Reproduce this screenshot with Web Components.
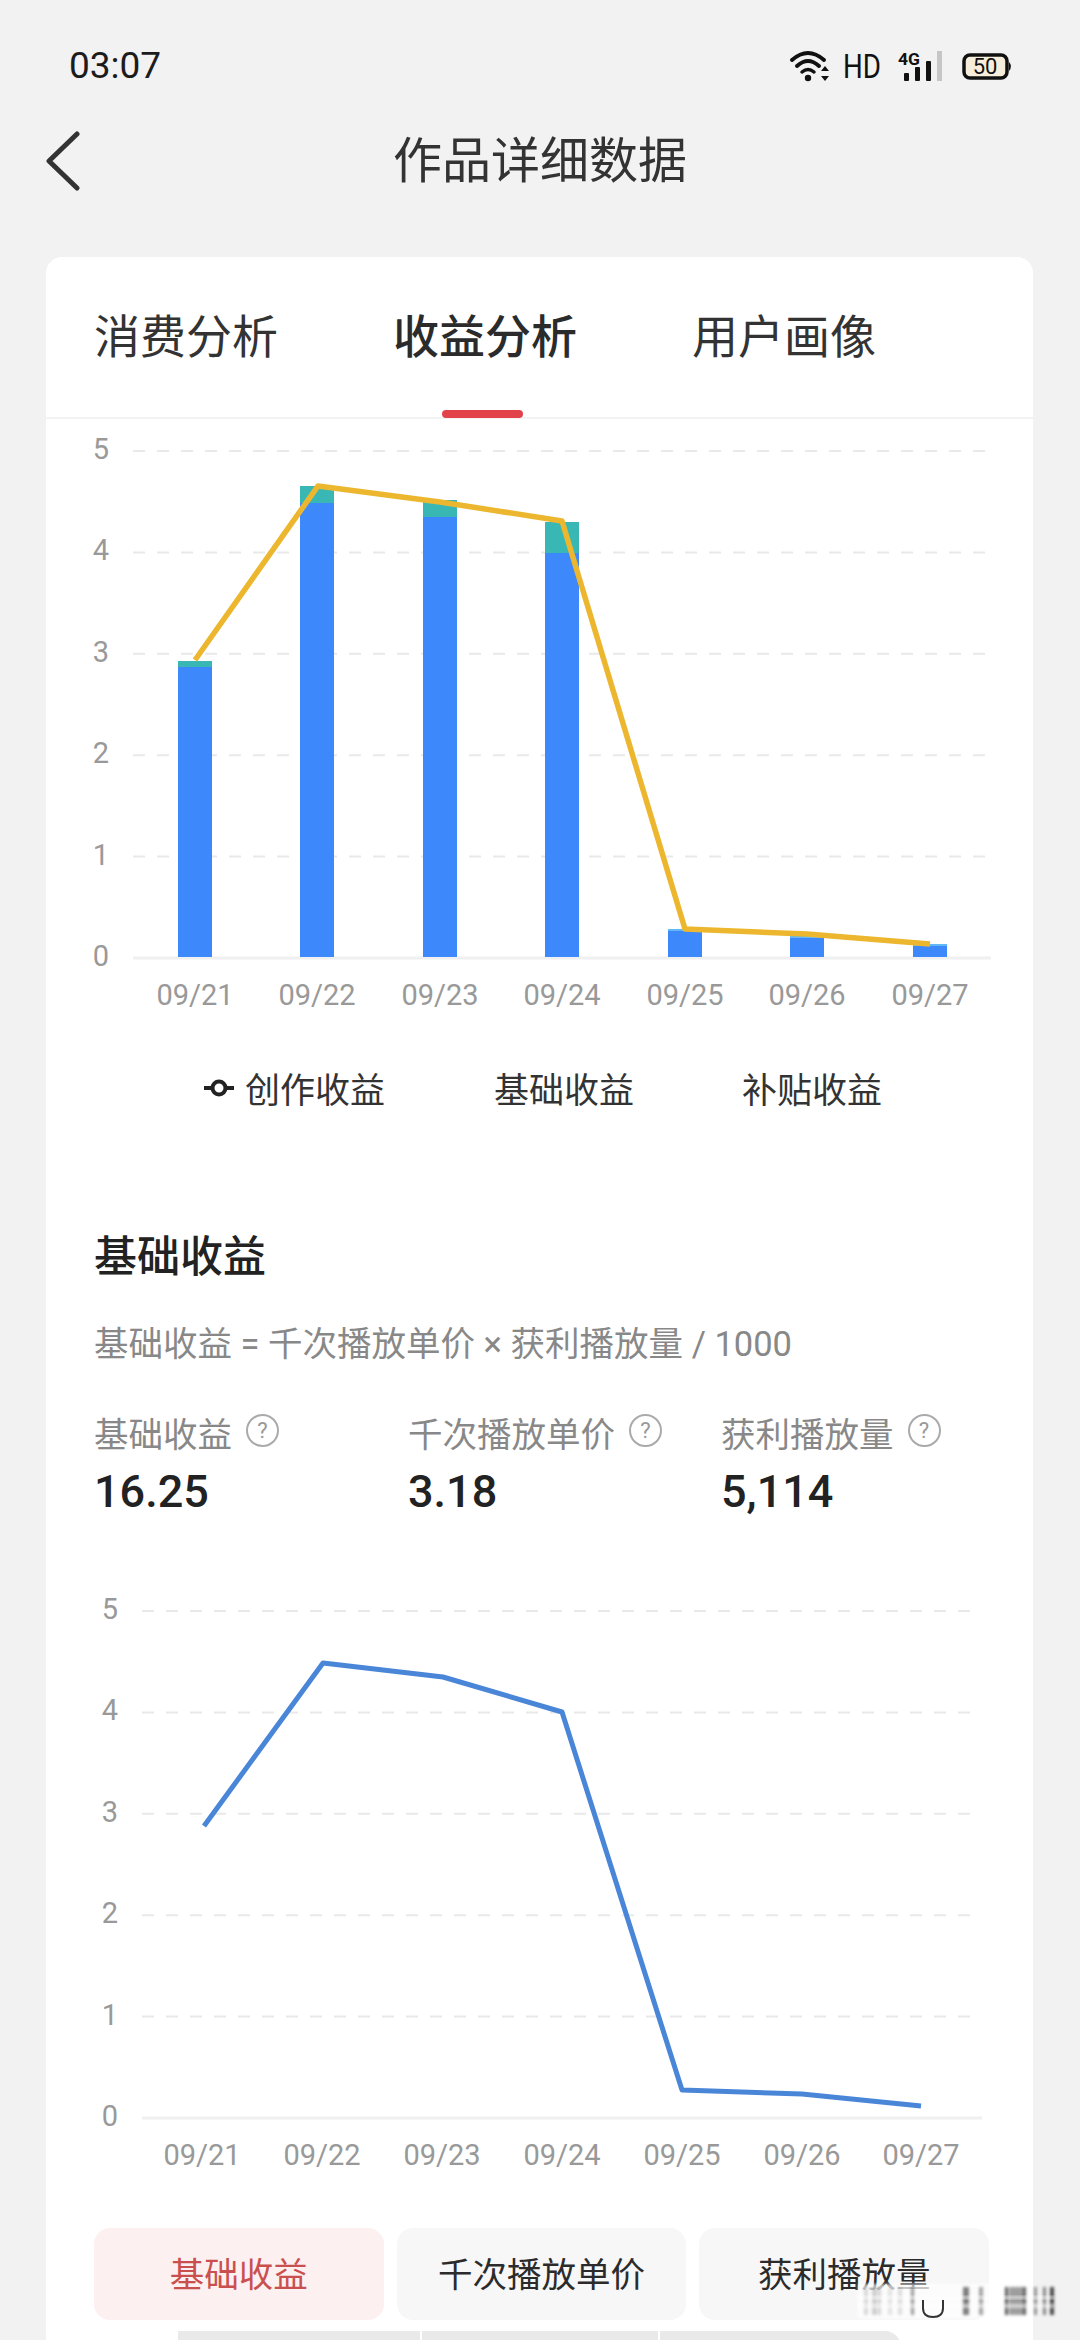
<!DOCTYPE html>
<html lang="zh-CN">
<head>
<meta charset="utf-8">
<title>作品详细数据</title>
<style>
    html, body { margin: 0; padding: 0; }
    body {
        position: relative;
        width: 1080px;
        height: 2340px;
        overflow: hidden;
        background: #f2f2f2;
        font-family: Roboto, "Noto Sans CJK SC", sans-serif;
        color: #333;
    }
</style>
</head>
<body>
<status-bar></status-bar>
<nav-header>作品详细数据</nav-header>
<data-card>
    <tab-strip active="1" items="消费分析,收益分析,用户画像"></tab-strip>
    <income-chart></income-chart>
    <chart-legend></chart-legend>
    <income-summary>
        <stat-item label="基础收益" value="16.25"></stat-item>
        <stat-item label="千次播放单价" value="3.18"></stat-item>
        <stat-item label="获利播放量" value="5,114"></stat-item>
    </income-summary>
    <base-chart></base-chart>
    <metric-tabs active="0" items="基础收益,千次播放单价,获利播放量"></metric-tabs>
    <table-head></table-head>
</data-card>
<water-mark></water-mark>

<script>
// 所有坐标直接用截图里的像素值，viewBox 再对齐到卡片
const DATES = ['09/21', '09/22', '09/23', '09/24', '09/25', '09/26', '09/27'];

function axisMarkup(o) {
    let s = '';
    for (let i = 0; i <= 5; i++) {
        const y = o.y0 - i * o.step;
        s += `<text class="num" x="${o.labelX}" y="${y + 8}" text-anchor="end">${i}</text>`;
        if (i === 0) {
            s += `<line x1="${o.x1}" x2="${o.x2}" y1="${y}" y2="${y}" stroke="#f0f0f0" stroke-width="3"/>`;
        } else {
            s += `<line x1="${o.x1}" x2="${o.gridEnd}" y1="${y}" y2="${y}" stroke="#e9e9e9" stroke-width="2" stroke-dasharray="12 12"/>`;
        }
    }
    o.xs.forEach((x, i) => {
        s += `<text class="num" x="${x}" y="${o.dateY}" text-anchor="middle">${DATES[i]}</text>`;
    });
    return s;
}

const chartStyle = `
    :host { display: block; }
    svg { display: block; }
    .num { font: 29px Roboto, sans-serif; fill: #999; }
`;

class StatusBar extends HTMLElement {
    constructor() {
        super();
        this.attachShadow({ mode: 'open' }).innerHTML = `
            <style>
                :host {
                    display: flex;
                    align-items: center;
                    justify-content: space-between;
                    box-sizing: border-box;
                    height: 120px;
                    padding: 12px 66px 0 69px;
                }
                .time { font: 37px/40px Roboto, sans-serif; color: #1c1c1c; }
                svg { display: block; }
                text { font-family: Roboto, sans-serif; fill: #111; }
            </style>
            <span class="time">03:07</span>
            <svg width="226" height="60" viewBox="788 36 226 60">
                <g fill="none" stroke="#111" stroke-linecap="round">
                    <path d="M792 60 Q808 46 824 60" stroke-width="4"/>
                    <path d="M797 66 Q808 56 819 66" stroke-width="4"/>
                    <path d="M802 72 Q808 67 814 72" stroke-width="3.5"/>
                </g>
                <circle cx="808" cy="78" r="3.2" fill="#111"/>
                <path d="M825 66 l-4 5 h8 Z M825 81 l-4 -5 h8 Z" fill="#111"/>
                <text x="843" y="78" font-size="33" textLength="38" lengthAdjust="spacingAndGlyphs">HD</text>
                <text x="898" y="65" font-size="17" font-weight="700" textLength="22" lengthAdjust="spacingAndGlyphs">4G</text>
                <rect x="904" y="73" width="5" height="8" rx="1" fill="#111"/>
                <rect x="915" y="67" width="5" height="14" rx="1" fill="#111"/>
                <rect x="926" y="61" width="5" height="20" rx="1" fill="#111"/>
                <rect x="937" y="51" width="5" height="30" fill="#c6c6c6"/>
                <rect x="964" y="55" width="43" height="23" rx="6" fill="#f6eeda" stroke="#111" stroke-width="3.5"/>
                <path d="M1009 62 q4 4 0 9 Z" fill="#111"/>
                <text x="985" y="74" font-size="22" text-anchor="middle">50</text>
            </svg>
        `;
    }
}

class NavHeader extends HTMLElement {
    constructor() {
        super();
        this.attachShadow({ mode: 'open' }).innerHTML = `
            <style>
                :host {
                    display: flex;
                    align-items: center;
                    justify-content: center;
                    position: relative;
                    box-sizing: border-box;
                    height: 80px;
                    padding-bottom: 8px;
                    font-size: 49px;
                    color: #333;
                }
                svg { position: absolute; left: 46px; top: 11px; }
            </style>
            <svg width="34" height="60" viewBox="46 131 34 60">
                <path d="M77 134 L49 161 L77 188" fill="none" stroke="#333" stroke-width="5" stroke-linecap="round" stroke-linejoin="round"/>
            </svg>
            <slot></slot>
        `;
    }
}

class DataCard extends HTMLElement {
    constructor() {
        super();
        this.attachShadow({ mode: 'open' }).innerHTML = `
            <style>
                :host {
                    display: block;
                    margin: 57px 47px 0 46px;
                    background: #fff;
                    border-radius: 16px 16px 0 0;
                }
            </style>
            <slot></slot>
        `;
    }
}

class TabStrip extends HTMLElement {
    connectedCallback() {
        const active = +this.getAttribute('active');
        const tabs = this.getAttribute('items').split(',').map((t, i) =>
            `<span class="tab ${i === active ? 'on' : ''}">${t}</span>`).join('');
        this.attachShadow({ mode: 'open' }).innerHTML = `
            <style>
                :host {
                    display: flex;
                    gap: 115px;
                    box-sizing: content-box;
                    height: 160px;
                    padding-left: 48px;
                    border-bottom: 2px solid #f3f3f3;
                }
                .tab {
                    position: relative;
                    height: 160px;
                    line-height: 160px;
                    font-size: 46px;
                    color: #333;
                }
                .on { font-weight: 500; color: #2b2b2b; }
                .on::after {
                    content: '';
                    position: absolute;
                    left: 49px;
                    bottom: -1px;
                    width: 81px;
                    height: 8px;
                    border-radius: 4px;
                    background: #e2434a;
                }
            </style>
            ${tabs}
        `;
    }
}

class IncomeChart extends HTMLElement {
    constructor() {
        super();
        const xs = [195, 317, 440, 562, 685, 807, 930];
        const bars = [[661, 667], [486, 503], [500, 517], [522, 553], [929, 931], [936, 938], [944, 946]];
        const line = [[195, 660], [318, 486], [440, 502], [562, 521], [685, 929], [807, 934], [930, 944]];
        let body = axisMarkup({ y0: 958, step: 101.4, x1: 133, x2: 991, gridEnd: 988, labelX: 109, dateY: 1005, xs });
        bars.forEach(([teal, blue], i) => {
            const x = xs[i] - 17;
            const color = i > 3 ? '#62b8f5' : '#38b7b5';
            body += `<rect x="${x}" y="${teal}" width="34" height="${blue - teal}" fill="${color}"/>`;
            body += `<rect x="${x}" y="${blue}" width="34" height="${957 - blue}" fill="#3d88fb"/>`;
        });
        body += `<polyline points="${line.join(' ')}" fill="none" stroke="#ecb72e" stroke-width="5.5" stroke-linejoin="round"/>`;
        this.attachShadow({ mode: 'open' }).innerHTML = `
            <style>${chartStyle}</style>
            <svg width="987" height="621" viewBox="46 419 987 621">${body}</svg>
        `;
    }
}

class ChartLegend extends HTMLElement {
    constructor() {
        super();
        this.attachShadow({ mode: 'open' }).innerHTML = `
            <style>
                :host {
                    display: flex;
                    align-items: center;
                    box-sizing: border-box;
                    gap: 109px;
                    height: 100px;
                    padding: 0 0 5px 158px;
                    font-size: 35px;
                    color: #333;
                }
                .first { display: flex; align-items: center; gap: 11px; }
                .base { margin-right: -1px; }
                svg { display: block; }
            </style>
            <span class="first">
                <svg width="30" height="18" viewBox="0 0 30 18">
                    <path d="M0 9 H30" stroke="#222" stroke-width="4"/>
                    <circle cx="15" cy="9" r="6.5" fill="#fff" stroke="#222" stroke-width="4"/>
                </svg>
                <span>创作收益</span>
            </span>
            <span class="base">基础收益</span>
            <span>补贴收益</span>
        `;
    }
}

class IncomeSummary extends HTMLElement {
    constructor() {
        super();
        this.attachShadow({ mode: 'open' }).innerHTML = `
            <style>
                :host { display: block; padding-left: 48px; }
                h2 {
                    margin: 87px 0 0;
                    font-size: 43px;
                    line-height: 60px;
                    font-weight: 500;
                    color: #222;
                }
                p {
                    margin: 32px 0 0;
                    font-size: 34.5px;
                    line-height: 50px;
                    color: #888;
                }
                .stats {
                    display: grid;
                    grid-template-columns: 314px 313px 1fr;
                    margin-top: 41px;
                }
            </style>
            <h2>基础收益</h2>
            <p>基础收益 = 千次播放单价 × 获利播放量 / 1000</p>
            <div class="stats"><slot></slot></div>
        `;
    }
}

class StatItem extends HTMLElement {
    connectedCallback() {
        this.attachShadow({ mode: 'open' }).innerHTML = `
            <style>
                :host { display: block; }
                .label {
                    display: flex;
                    align-items: center;
                    gap: 14px;
                    height: 50px;
                    font-size: 34.5px;
                    color: #888;
                }
                .label span:first-child { margin-bottom: 6px; }
                .help {
                    display: flex;
                    align-items: center;
                    justify-content: center;
                    box-sizing: border-box;
                    width: 33px;
                    height: 33px;
                    margin-bottom: 10px;
                    border: 2px solid #aaa;
                    border-radius: 50%;
                    font-size: 22px;
                    color: #999;
                }
                .value {
                    margin-top: 2px;
                    font-size: 45px;
                    line-height: 60px;
                    font-weight: 500;
                    color: #222;
                }
            </style>
            <div class="label"><span>${this.getAttribute('label')}</span><span class="help">?</span></div>
            <div class="value">${this.getAttribute('value')}</div>
        `;
    }
}

class BaseChart extends HTMLElement {
    constructor() {
        super();
        const xs = [202, 322, 442, 562, 682, 802, 921];
        const line = [[204, 1826], [323, 1663], [443, 1677], [562, 1712], [682, 2090], [802, 2094], [921, 2106]];
        const body = axisMarkup({ y0: 2118, step: 101.4, x1: 142, x2: 982, gridEnd: 976, labelX: 118, dateY: 2165, xs })
            + `<polyline points="${line.join(' ')}" fill="none" stroke="#4a86d8" stroke-width="5" stroke-linejoin="round"/>`;
        this.attachShadow({ mode: 'open' }).innerHTML = `
            <style>${chartStyle}</style>
            <svg width="987" height="668" viewBox="46 1522 987 668">${body}</svg>
        `;
    }
}

class MetricTabs extends HTMLElement {
    connectedCallback() {
        const active = +this.getAttribute('active');
        const btns = this.getAttribute('items').split(',').map((t, i) =>
            `<span class="btn ${i === active ? 'on' : ''}">${t}</span>`).join('');
        this.attachShadow({ mode: 'open' }).innerHTML = `
            <style>
                :host {
                    display: grid;
                    grid-template-columns: repeat(3, 1fr);
                    gap: 13px;
                    width: 895px;
                    margin: 38px 0 0 48px;
                }
                .btn {
                    height: 92px;
                    line-height: 94px;
                    text-align: center;
                    border-radius: 16px;
                    background: #f7f7f7;
                    font-size: 34.5px;
                    color: #2b2b2b;
                }
                .on { background: #fdf0f0; color: #c9504f; }
            </style>
            ${btns}
        `;
    }
}

class TableHead extends HTMLElement {
    constructor() {
        super();
        this.attachShadow({ mode: 'open' }).innerHTML = `
            <style>
                :host {
                    display: grid;
                    grid-template-columns: 242px 236px 241px;
                    gap: 2px;
                    width: 722px;
                    height: 30px;
                    margin: 11px 0 0 132px;
                }
                div { background: #e9e9e9; }
                div:first-child { border-top-left-radius: 16px; }
                div:last-child { border-top-right-radius: 16px; }
            </style>
            <div></div><div></div><div></div>
        `;
    }
}

// 右下角被抹掉的水印，只是一团模糊的竖条
class WaterMark extends HTMLElement {
    constructor() {
        super();
        const streaks = [
            [864, 4, .14], [872, 5, .18], [878, 3, .16], [888, 4, .1], [898, 4, .12], [911, 3, .4],
            [963, 6, .5], [979, 4, .35], [1005, 3, .65], [1009, 14, .38], [1023, 3, .6], [1034, 3, .4], [1043, 3, .45], [1050, 4, .7]
        ].map(([x, w, a]) => `<rect x="${x}" y="2287" width="${w}" height="28" fill="#000" opacity="${a}"/>`).join('');
        this.attachShadow({ mode: 'open' }).innerHTML = `
            <style>
                :host { position: absolute; left: 850px; top: 2280px; width: 230px; height: 50px; }
                svg { display: block; }
            </style>
            <svg width="230" height="50" viewBox="850 2280 230 50">
                <defs><filter id="b" x="-10%" y="-30%" width="120%" height="160%"><feGaussianBlur stdDeviation="1.6"/></filter></defs>
                <rect x="858" y="2284" width="175" height="34" fill="#fff" opacity=".72" filter="url(#b)"/>
                <g filter="url(#b)">${streaks}</g>
                <rect x="858" y="2296" width="197" height="3" fill="#fff" opacity=".6" filter="url(#b)"/>
                <rect x="858" y="2304" width="197" height="4" fill="#fff" opacity=".55" filter="url(#b)"/>
                <path d="M923 2300 V2308 Q923 2317 933 2317 Q943 2317 943 2308 V2300" fill="none" stroke="#333" stroke-width="2"/>
            </svg>
        `;
    }
}

customElements.define('status-bar', StatusBar);
customElements.define('nav-header', NavHeader);
customElements.define('data-card', DataCard);
customElements.define('tab-strip', TabStrip);
customElements.define('income-chart', IncomeChart);
customElements.define('chart-legend', ChartLegend);
customElements.define('income-summary', IncomeSummary);
customElements.define('stat-item', StatItem);
customElements.define('base-chart', BaseChart);
customElements.define('metric-tabs', MetricTabs);
customElements.define('table-head', TableHead);
customElements.define('water-mark', WaterMark);
</script>
</body>
</html>
